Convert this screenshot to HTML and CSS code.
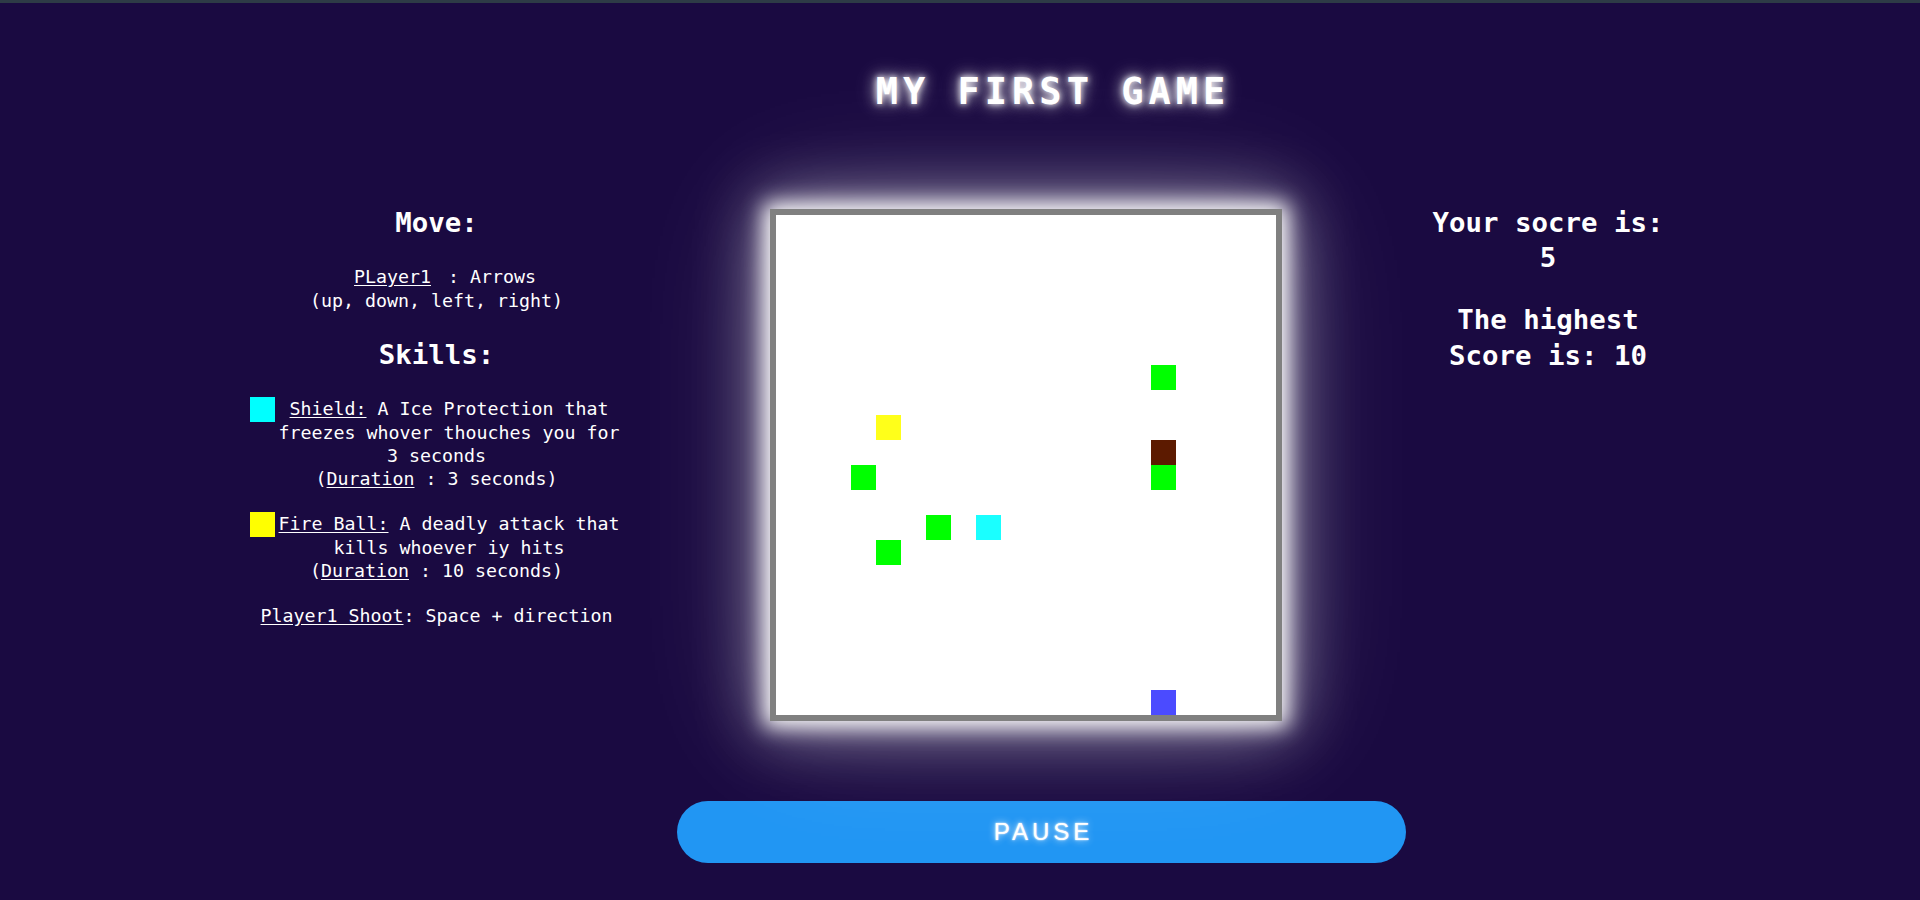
FILE: index.html
```html
<!DOCTYPE html>
<html lang="en">
<head>
<meta charset="utf-8">
<title>My First Game</title>
<link rel="stylesheet" href="styles.css">
</head>
<body>
<header class="top">
  <h1 class="title">MY FIRST GAME</h1>
</header>
<main class="stage">
  <section class="help">
    <h2 class="heading">Move:</h2>
    <p class="text"><span class="indent"></span><u class="key">PLayer1</u> : Arrows<br>(up, down, left, right)</p>
    <h2 class="heading">Skills:</h2>
    <p class="text skill"><span class="swatch swatch-ice"></span><u>Shield:</u> A Ice Protection that freezes whover thouches you for 3 seconds<br>(<u>Duration</u> : 3 seconds)</p>
    <p class="text skill"><span class="swatch swatch-fire"></span><u>Fire Ball:</u> A deadly attack that kills whoever iy hits<br>(<u>Duration</u> : 10 seconds)</p>
    <p class="text"><u>Player1 Shoot</u>: Space + direction</p>
  </section>
  <div class="board">
    <span class="cell cell-food" style="grid-area: 7 / 16"></span>
    <span class="cell cell-fire" style="grid-area: 9 / 5"></span>
    <span class="cell cell-enemy" style="grid-area: 10 / 16"></span>
    <span class="cell cell-food" style="grid-area: 11 / 16"></span>
    <span class="cell cell-food" style="grid-area: 11 / 4"></span>
    <span class="cell cell-food" style="grid-area: 13 / 7"></span>
    <span class="cell cell-ice" style="grid-area: 13 / 9"></span>
    <span class="cell cell-food" style="grid-area: 14 / 5"></span>
    <span class="cell cell-player" style="grid-area: 20 / 16"></span>
  </div>
  <section class="score">
    <h2 class="heading">Your socre is: 5</h2>
    <h2 class="heading">The highest Score is: 10</h2>
  </section>
</main>
<div class="controls">
  <button class="pause" type="button">PAUSE</button>
</div>
</body>
</html>
```
FILE: styles.css
```css
* {
  box-sizing: border-box;
}

html {
  background: #1a0a41;
}

body {
  margin: 0;
  min-height: 100vh;
  background: #1a0a41;
  border-top: 3px solid #2d3b46;
  color: #ffffff;
  font-family: "DejaVu Sans Mono", "Liberation Mono", monospace;
}

.top {
  padding-top: 67px;
  padding-left: 186px;
  text-align: center;
}

.title {
  margin: 0;
  font-size: 37px;
  line-height: 44px;
  font-weight: bold;
  letter-spacing: 5px;
  color: #ffffff;
  text-shadow: 0 0 6px #ffffff, 0 0 14px rgba(255, 255, 255, 0.8), 0 0 24px rgba(255, 255, 255, 0.4);
}

.stage {
  display: flex;
  align-items: flex-start;
  margin-top: 65px;
  padding-left: 250px;
}

.help {
  width: 373px;
  padding-top: 1px;
  text-align: center;
}

.heading {
  margin: 25px 0;
  font-size: 27.4px;
  line-height: 35.2px;
  font-weight: bold;
}

.text {
  margin: 21.6px 0;
  font-size: 18.27px;
  line-height: 23.4px;
}

.text u {
  text-underline-offset: 2px;
}

.indent {
  display: inline-block;
  width: 17px;
}

.key {
  margin-right: 6px;
}

.swatch {
  float: left;
  width: 25px;
  height: 25px;
}

.swatch-ice {
  background: #00ffff;
}

.swatch-fire {
  background: #ffff00;
}

.board {
  display: grid;
  grid-template-columns: repeat(20, 25px);
  grid-template-rows: repeat(20, 25px);
  width: 512px;
  height: 512px;
  margin: 30px 141px 0 147px;
  border: 6px solid #808080;
  background: #ffffff;
  box-shadow: 0 0 20px 6px #ffffff, 0 0 60px 10px rgba(255, 255, 255, 0.5), 0 0 130px rgba(255, 255, 255, 0.22);
  flex: none;
}

.cell {
  display: block;
}

.cell-food {
  background: #00ff00;
}

.cell-fire {
  background: #ffff1a;
}

.cell-ice {
  background: #1affff;
}

.cell-enemy {
  background: #5c1a00;
}

.cell-player {
  background: #4b4bff;
}

.score {
  width: 250px;
  text-align: center;
}

.score .heading {
  margin: 26px 0;
}

.score .heading + .heading {
  margin-top: 27px;
}

.controls {
  margin-top: 80px;
  padding-left: 677px;
}

.pause {
  display: block;
  width: 729px;
  height: 62px;
  border: none;
  border-radius: 31px;
  background: #2196f3;
  color: #ffffff;
  font-family: "Liberation Sans", Arial, sans-serif;
  font-size: 24px;
  letter-spacing: 4px;
  text-indent: 4px;
  text-shadow: 0 0 2px #ffffff, 0 0 7px rgba(255, 255, 255, 0.9);
  cursor: pointer;
}
```
